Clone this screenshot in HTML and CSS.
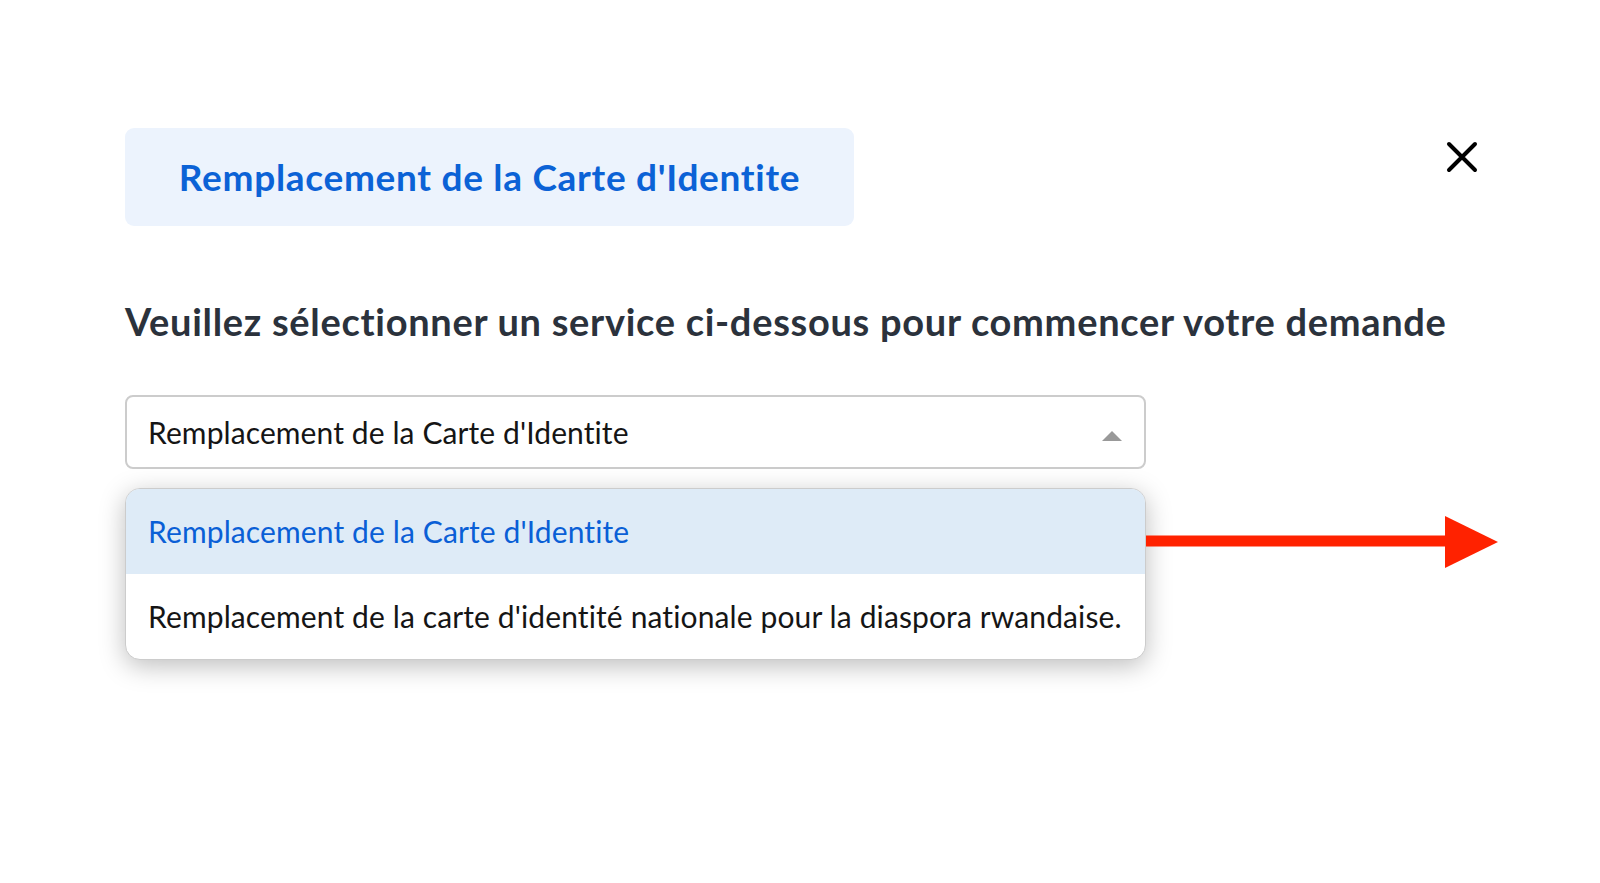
FILE: index.html
```html
<!DOCTYPE html>
<html lang="fr">
<head>
<meta charset="utf-8">
<title>Service</title>
<link rel="stylesheet" href="styles.css">
</head>
<body>
<div class="page">
  <div class="header">
    <div class="title-box"><span class="title">Remplacement de la Carte d'Identite</span></div>
    <button class="close" aria-label="Fermer">
      <svg width="32" height="32" viewBox="0 0 32 32"><path d="M3 3 L29 29 M29 3 L3 29" stroke="#000" stroke-width="4" stroke-linecap="round" fill="none"/></svg>
    </button>
  </div>
  <h2 class="heading">Veuillez sélectionner un service ci-dessous pour commencer votre demande</h2>
  <div class="select-wrap">
    <div class="select">
      <span class="select-value">Remplacement de la Carte d'Identite</span>
      <span class="caret"></span>
    </div>
    <div class="menu">
      <div class="option active">Remplacement de la Carte d'Identite</div>
      <div class="option">Remplacement de la carte d'identité nationale pour la diaspora rwandaise.</div>
    </div>
    <div class="arrow">
      <svg width="352" height="52" viewBox="0 0 352 52"><rect x="0" y="19.5" width="300" height="11" fill="#ff2200"/><path d="M299 0 L352 26 L299 52 Z" fill="#ff2200"/></svg>
    </div>
  </div>
</div>
</body>
</html>
```
FILE: styles.css
```css
html, body {
  margin: 0;
  padding: 0;
  background: #ffffff;
}
body {
  font-family: Lato, "Open Sans", "Liberation Sans", sans-serif;
  color: #111;
}
.page {
  box-sizing: border-box;
  min-height: 883px;
  padding: 128px 0 0 125px;
  width: 1477px;
}
.header {
  display: flex;
  justify-content: space-between;
  align-items: flex-start;
}
.title-box {
  width: 729px;
  height: 98px;
  background: #ecf3fd;
  border-radius: 9px;
  display: flex;
  align-items: center;
  justify-content: center;
}
.title {
  font-size: 37px;
  font-weight: 700;
  color: #0b62d6;
  line-height: 1.2;
  letter-spacing: 0.7px;
}
.close {
  margin-top: 13px;
  margin-right: -1px;
  padding: 0;
  border: 0;
  background: transparent;
  width: 32px;
  height: 32px;
  display: block;
}
.close svg { display: block; }
.heading {
  margin: 73px 0 0 0;
  font-size: 38px;
  line-height: 1.2;
  font-weight: 700;
  color: #2b323c;
  white-space: nowrap;
  letter-spacing: 0.7px;
}
.select-wrap {
  position: relative;
  width: 1021px;
  margin-top: 50px;
}
.select {
  box-sizing: border-box;
  height: 74px;
  border: 2px solid #cccccc;
  border-radius: 8px;
  display: flex;
  align-items: center;
  justify-content: space-between;
  padding: 0 22px 0 21px;
}
.select-value {
  font-size: 30px;
  color: #151515;
  letter-spacing: 0.1px;
}
.caret {
  width: 0;
  height: 0;
  border-left: 10px solid transparent;
  border-right: 10px solid transparent;
  border-bottom: 10px solid #999999;
  margin-top: 8px;
}
.menu {
  margin-top: 19px;
  border: 1px solid #cccccc;
  border-radius: 15px;
  overflow: hidden;
  box-shadow: 0 6px 26px rgba(0, 0, 0, 0.26);
  background: #fff;
}
.option {
  height: 85px;
  display: flex;
  align-items: center;
  padding: 0 22px;
  font-size: 30px;
  color: #151515;
  white-space: nowrap;
  letter-spacing: 0.12px;
}
.option.active {
  background: #deebf7;
  color: #0a5fd6;
}
.arrow {
  position: absolute;
  left: 1021px;
  top: 121px;
  line-height: 0;
}
```
